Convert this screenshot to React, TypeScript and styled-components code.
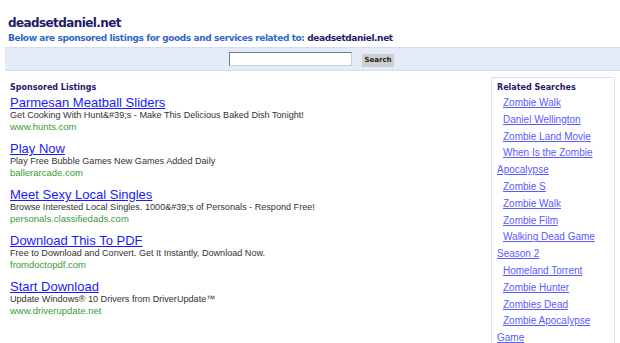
import React from "react";
import styled, { createGlobalStyle } from "styled-components";

const Global = createGlobalStyle`
  html, body { margin: 0; padding: 0; background: #fff; overflow: hidden; }
  body { width: 620px; height: 343px; }
`;

const Page = styled.div`
  width: 620px;
  padding-top: 15px;
`;

const Header = styled.div`
  padding-left: 8px;
`;

const Title = styled.h1`
  margin: 0;
  font-family: "DejaVu Sans", Verdana, sans-serif;
  font-weight: bold;
  font-size: 12px;
  line-height: 16px;
  color: #1c1c68;
  letter-spacing: -0.6px;
`;

const Subtitle = styled.div`
  margin-top: 1px;
  font-family: "DejaVu Sans", Verdana, sans-serif;
  font-weight: bold;
  font-size: 9px;
  line-height: 13px;
  color: #3366cc;
  letter-spacing: -0.4px;
  span { color: #1c1c68; }
`;

const SearchBand = styled.div`
  margin: 2px 0 0 5px;
  height: 22px;
  background: #e5ecf9;
  border-top: 1px solid #d3def5;
  border-bottom: 1px solid #d3def5;
  display: flex;
  align-items: center;
  padding-left: 224px;
  gap: 10px;
`;

const SearchInput = styled.input`
  box-sizing: border-box;
  width: 123px;
  height: 14px;
  border: 1px solid #777;
  border-right-color: #ccc;
  border-bottom-color: #ccc;
  background: #fff;
  padding: 0;
  margin: 0;
`;

const SearchButton = styled.button`
  box-sizing: border-box;
  height: 13px;
  width: 32px;
  margin-top: 2px;
  padding: 0;
  border: none;
  background: #cfcfcf;
  font-family: "DejaVu Sans", Verdana, sans-serif;
  font-weight: bold;
  font-size: 7px;
  color: #222;
`;

const Content = styled.div`
  display: flex;
  margin-top: 6px;
`;

const Main = styled.div`
  flex: 1;
  padding-left: 10px;
  padding-top: 5px;
`;

const SectionLabel = styled.div`
  font-family: "DejaVu Sans", Verdana, sans-serif;
  font-weight: bold;
  font-size: 8px;
  line-height: 12px;
  color: #1c1c68;
`;

const AdList = styled.div`
  display: flex;
  flex-direction: column;
  gap: 9px;
  margin-top: 1px;
`;

const Ad = styled.div`
  display: flex;
  flex-direction: column;
`;

const AdTitle = styled.a`
  font-family: "Liberation Sans", Arial, sans-serif;
  font-size: 13px;
  line-height: 15px;
  color: #1a1aff;
  text-decoration: underline;
  width: fit-content;
`;

const AdDesc = styled.div`
  font-family: "Liberation Sans", Arial, sans-serif;
  font-size: 9.1px;
  line-height: 11px;
  color: #333;
`;

const AdUrl = styled.div`
  font-family: "Liberation Sans", Arial, sans-serif;
  font-size: 9.5px;
  line-height: 11px;
  color: #3a9b3a;
`;

const Sidebar = styled.div`
  width: 117px;
  margin-right: 5px;
  border: 1px solid #d5e0f6;
  border-bottom: none;
  padding: 4px 0 0 5px;
`;

const SideLabel = styled(SectionLabel)`
  margin-bottom: 1px;
`;

const RelatedLink = styled.a`
  display: block;
  text-indent: 6px;
  font-family: "Liberation Sans", Arial, sans-serif;
  font-size: 10px;
  line-height: 16.8px;
  color: #5a5aff;
  text-decoration: underline;
`;

const ads = [
  {
    title: "Parmesan Meatball Sliders",
    desc: "Get Cooking With Hunt&#39;s - Make This Delicious Baked Dish Tonight!",
    url: "www.hunts.com",
  },
  {
    title: "Play Now",
    desc: "Play Free Bubble Games New Games Added Daily",
    url: "ballerarcade.com",
  },
  {
    title: "Meet Sexy Local Singles",
    desc: "Browse Interested Local Singles. 1000&#39;s of Personals - Respond Free!",
    url: "personals.classifiedads.com",
  },
  {
    title: "Download This To PDF",
    desc: "Free to Download and Convert. Get It Instantly, Download Now.",
    url: "fromdoctopdf.com",
  },
  {
    title: "Start Download",
    desc: "Update Windows® 10 Drivers from DriverUpdate™",
    url: "www.driverupdate.net",
  },
];

const related = [
  "Zombie Walk",
  "Daniel Wellington",
  "Zombie Land Movie",
  "When Is the Zombie Apocalypse",
  "Zombie S",
  "Zombie Walk",
  "Zombie Film",
  "Walking Dead Game Season 2",
  "Homeland Torrent",
  "Zombie Hunter",
  "Zombies Dead",
  "Zombie Apocalypse Game",
];

export default function App() {
  return (
    <Page>
      <Global />
      <Header>
        <Title>deadsetdaniel.net</Title>
        <Subtitle>
          Below are sponsored listings for goods and services related to: <span>deadsetdaniel.net</span>
        </Subtitle>
      </Header>
      <SearchBand>
        <SearchInput type="text" />
        <SearchButton>Search</SearchButton>
      </SearchBand>
      <Content>
        <Main>
          <SectionLabel>Sponsored Listings</SectionLabel>
          <AdList>
            {ads.map((a) => (
              <Ad key={a.title}>
                <AdTitle href="#">{a.title}</AdTitle>
                <AdDesc>{a.desc}</AdDesc>
                <AdUrl>{a.url}</AdUrl>
              </Ad>
            ))}
          </AdList>
        </Main>
        <Sidebar>
          <SideLabel>Related Searches</SideLabel>
          {related.map((r, i) => (
            <RelatedLink key={i} href="#">{r}</RelatedLink>
          ))}
        </Sidebar>
      </Content>
    </Page>
  );
}
